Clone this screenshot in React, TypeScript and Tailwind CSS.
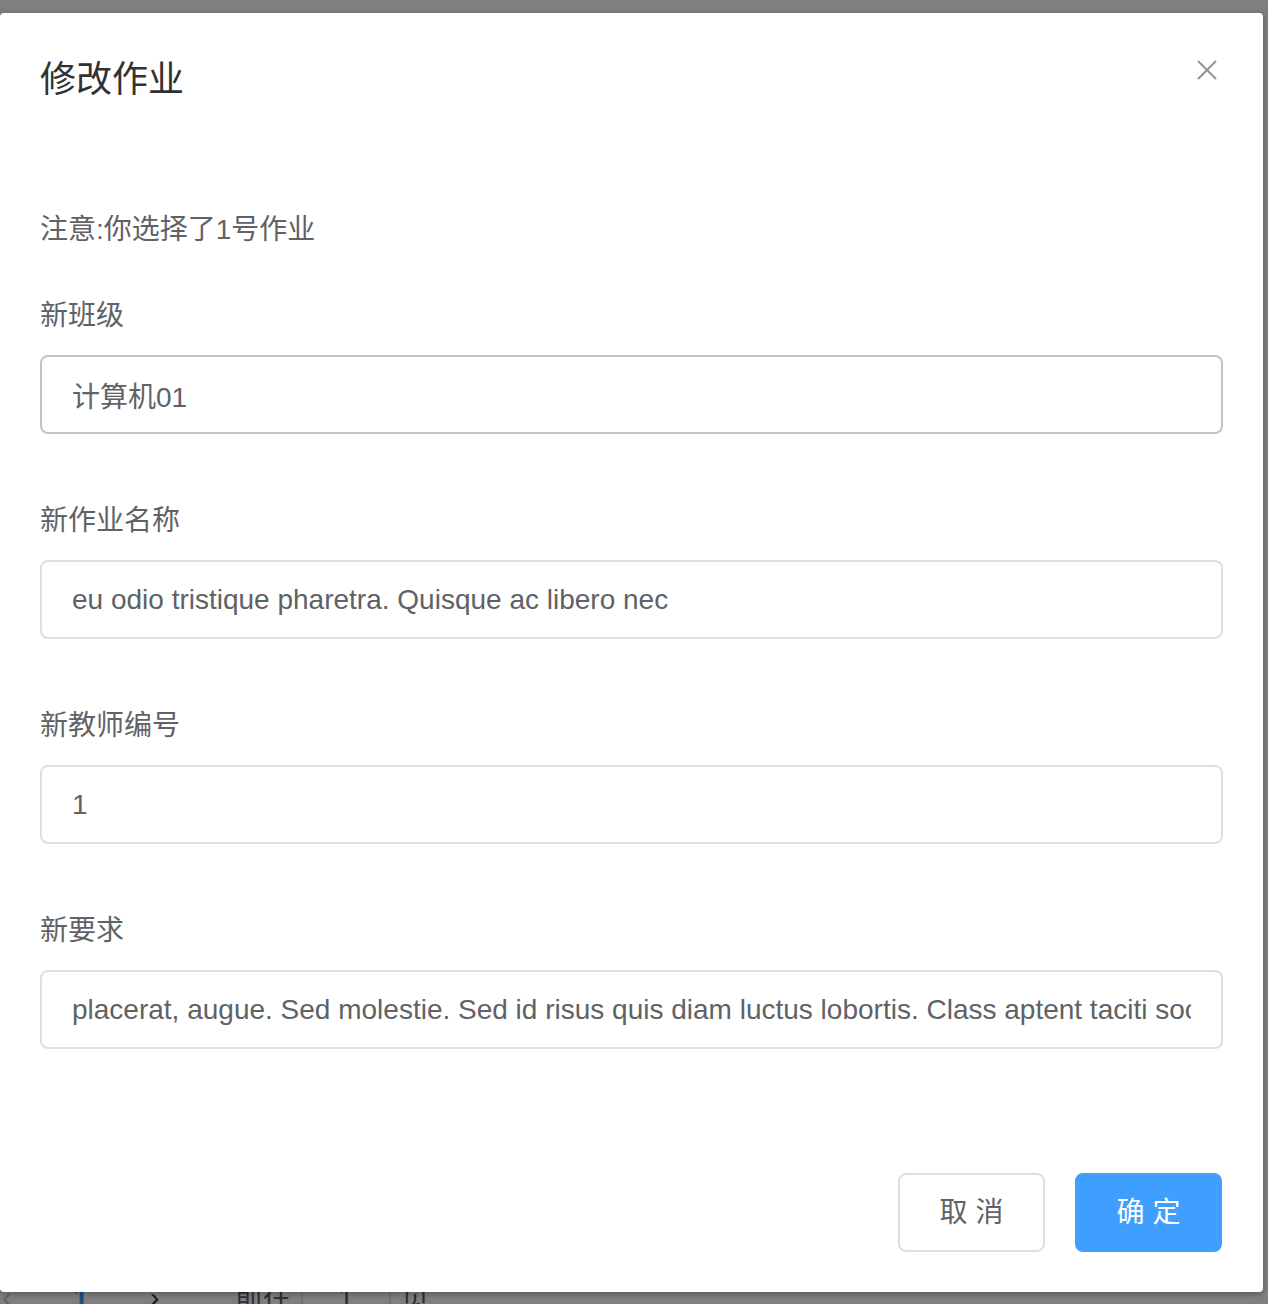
import React from "react";

const font = { fontFamily: '"Liberation Sans", "Noto Sans CJK SC", sans-serif' };

function Field({ label, value, strong }: { label: string; value: string; strong?: boolean }) {
  return (
    <div className="flex flex-col">
      <div className="text-[28px] leading-[42px] text-[#606266]">{label}</div>
      <input
        readOnly
        defaultValue={value}
        className={`mt-[18px] h-[79px] w-full rounded-[8px] border-2 bg-white px-[30px] text-[28px] text-[#606266] outline-none ${
          strong ? "border-[#c0c4cc]" : "border-[#dcdfe6]"
        }`}
        style={font}
      />
    </div>
  );
}

export default function App() {
  return (
    <div className="relative h-[1304px] w-full overflow-hidden bg-white" style={font}>
      {/* page behind the dialog */}
      <div className="flex items-start pt-[1278px] text-[28px] leading-[40px] text-[#606266]">
        <span className="w-[73px] pl-[2px] text-[#c0c4cc]">‹</span>
        <span className="w-[77px] font-bold text-[#409eff]">1</span>
        <span className="w-[85px] text-[#303133]">›</span>
        <span>前往</span>
        <span className="ml-[10px] flex h-[60px] w-[90px] justify-center border-x-2 border-[#dcdfe6]">1</span>
        <span className="ml-[10px]">页</span>
      </div>

      {/* overlay */}
      <div className="absolute inset-0 bg-black/50">
        <div className="mt-[13px] flex h-[1279px] w-[1263px] flex-col rounded-[4px] bg-white shadow-[0_2px_6px_rgba(0,0,0,0.3)]">
          <div className="flex items-start justify-between px-[40px] pt-[43px]">
            <div className="text-[36px] leading-[48px] text-[#303133]">修改作业</div>
            <button className="mr-[6px] mt-[4px] h-[20px] w-[20px]">
              <svg viewBox="0 0 20 20" width="20" height="20" fill="none" stroke="#909399" strokeWidth="2">
                <path d="M1 1 L19 19 M19 1 L1 19" />
              </svg>
            </button>
          </div>

          <div className="flex flex-1 flex-col px-[40px] pt-[105px]">
            <div className="text-[28px] leading-[42px] text-[#606266]">注意:你选择了1号作业</div>
            <div className="mt-[44px] flex flex-col gap-[66px]">
              <Field label="新班级" value="计算机01" strong />
              <Field label="新作业名称" value="eu odio tristique pharetra. Quisque ac libero nec" />
              <Field label="新教师编号" value="1" />
              <Field
                label="新要求"
                value="placerat, augue. Sed molestie. Sed id risus quis diam luctus lobortis. Class aptent taciti sociosqu ad litora torquent per conubia nostra"
              />
            </div>
          </div>

          <div className="flex justify-end gap-[30px] px-[41px] pb-[40px]">
            <button className="h-[79px] w-[147px] rounded-[8px] border-2 border-[#dcdfe6] bg-white text-[28px] text-[#606266]">
              取 消
            </button>
            <button className="h-[79px] w-[147px] rounded-[8px] border-2 border-[#409eff] bg-[#409eff] text-[28px] text-white">
              确 定
            </button>
          </div>
        </div>
      </div>
    </div>
  );
}
